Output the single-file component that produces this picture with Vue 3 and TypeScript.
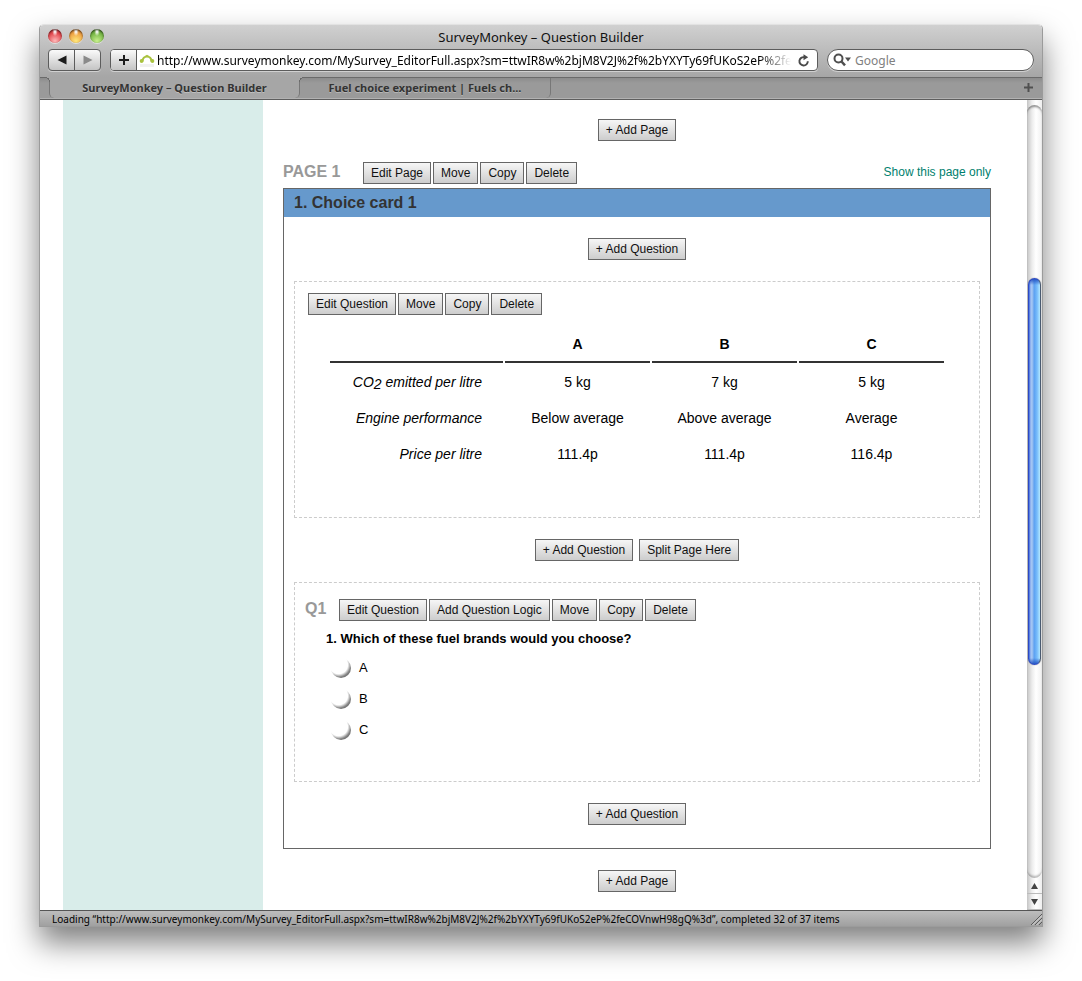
<script setup lang="ts">
import { ref } from 'vue'

interface Row {
  label: string
  values: string[]
}

const address = ref('http://www.surveymonkey.com/MySurvey_EditorFull.aspx?sm=ttwIR8w%2bjM8V2J%2f%2bYXYTy69fUKoS2eP%2feCOVnwH98gQ%3d')
const search = ref('')
const answer = ref('')
const options: string[] = ['A', 'B', 'C']
const rows: Row[] = [
  { label: 'Engine performance', values: ['Below average', 'Above average', 'Average'] },
  { label: 'Price per litre', values: ['111.4p', '111.4p', '116.4p'] },
]
</script>

<template>
  <div class="desktop">
    <div class="window">
      <header class="chrome">
        <div class="titlebar">
          <div class="lights">
            <button class="light red" aria-label="Close"></button>
            <button class="light amber" aria-label="Minimise"></button>
            <button class="light green" aria-label="Zoom"></button>
          </div>
          <div class="title">SurveyMonkey – Question Builder</div>
          <div></div>
        </div>
        <div class="toolbar">
          <div class="nav">
            <button aria-label="Back"><svg width="10" height="10" viewBox="0 0 10 10"><path d="M0.500 5L9.500 0.500V9.500Z" fill="#1c1c1c" /></svg></button>
            <button aria-label="Forward"><svg width="10" height="10" viewBox="0 0 10 10"><path d="M9.500 5L0.500 0.500V9.500Z" fill="#8a8a8a" /></svg></button>
          </div>
          <div class="address">
            <button class="plus" aria-label="Add bookmark"><svg width="12" height="12" viewBox="0 0 12 12"><path d="M6 1V11M1 6H11" stroke="#1c1c1c" stroke-width="2" /></svg></button>
            <svg class="favicon" width="16" height="16" viewBox="0 0 16 16">
              <rect x="1" y="12" width="14" height="3" fill="#f1f1f1" />
              <path d="M3.500 9.500C3.500 2.800 12.500 2.800 12.500 9.500" fill="none" stroke="#a9c23f" stroke-width="2.200" />
              <circle cx="2.600" cy="9" r="1.900" fill="#a9c23f" />
              <circle cx="13.400" cy="9" r="1.900" fill="#a9c23f" />
              <path d="M6 4L8 2.800L10 4Z" fill="#a9c23f" />
            </svg>
            <input v-model="address" class="url" type="text" aria-label="Address" />
            <button class="reload" aria-label="Reload">
              <svg width="12" height="13" viewBox="0 0 12 13"><path d="M9.800 7.200A4.200 4.200 0 1 1 6.500 3.200" fill="none" stroke="#4a4a4a" stroke-width="1.900" /><path d="M5.500 0.200L10.200 3.300L5.500 6.300Z" fill="#4a4a4a" /></svg>
            </button>
          </div>
          <label class="search">
            <svg width="18" height="14" viewBox="0 0 18 14"><circle cx="5.500" cy="5.500" r="4" fill="none" stroke="#4f4f4f" stroke-width="2" /><path d="M8.500 8.500L12 12.300" stroke="#4f4f4f" stroke-width="2.500" /><path d="M12 4.500H18L15 8.500Z" fill="#4f4f4f" /></svg>
            <input v-model="search" type="text" placeholder="Google" aria-label="Search Google" />
          </label>
        </div>
        <div class="tabs">
          <button class="tab active">SurveyMonkey – Question Builder</button>
          <button class="tab">Fuel choice experiment | Fuels ch...</button>
          <button class="newtab" aria-label="New tab"><svg width="9" height="9" viewBox="0 0 9 9"><path d="M4.500 0V9M0 4.500H9" stroke="#505050" stroke-width="2" /></svg></button>
        </div>
      </header>

      <div class="viewport">
        <aside class="side"></aside>
        <main class="main">
          <div class="center"><button class="btn">+ Add Page</button></div>
          <div class="pagebar">
            <h1>PAGE 1</h1>
            <div class="group">
              <button class="btn">Edit Page</button>
              <button class="btn">Move</button>
              <button class="btn">Copy</button>
              <button class="btn">Delete</button>
            </div>
            <a href="#">Show this page only</a>
          </div>
          <section class="panel">
            <h2>1. Choice card 1</h2>
            <div class="center"><button class="btn">+ Add Question</button></div>

            <article class="question card">
              <div class="group">
                <button class="btn">Edit Question</button>
                <button class="btn">Move</button>
                <button class="btn">Copy</button>
                <button class="btn">Delete</button>
              </div>
              <table>
                <thead>
                  <tr>
                    <th class="lead"></th>
                    <th v-for="o in options" :key="o" scope="col">{{ o }}</th>
                  </tr>
                </thead>
                <tbody>
                  <tr>
                    <th scope="row">CO<sub>2</sub> emitted per litre</th>
                    <td>5 kg</td>
                    <td>7 kg</td>
                    <td>5 kg</td>
                  </tr>
                  <tr v-for="r in rows" :key="r.label">
                    <th scope="row">{{ r.label }}</th>
                    <td v-for="(v, i) in r.values" :key="i">{{ v }}</td>
                  </tr>
                </tbody>
              </table>
            </article>

            <div class="center">
              <button class="btn">+ Add Question</button>
              <button class="btn">Split Page Here</button>
            </div>

            <article class="question choice">
              <div class="qbar">
                <h3>Q1</h3>
                <div class="group">
                  <button class="btn">Edit Question</button>
                  <button class="btn">Add Question Logic</button>
                  <button class="btn">Move</button>
                  <button class="btn">Copy</button>
                  <button class="btn">Delete</button>
                </div>
              </div>
              <fieldset>
                <legend>1. Which of these fuel brands would you choose?</legend>
                <label v-for="o in options" :key="o" class="option">
                  <input v-model="answer" type="radio" name="brand" :value="o" />
                  <span>{{ o }}</span>
                </label>
              </fieldset>
            </article>

            <div class="center"><button class="btn">+ Add Question</button></div>
          </section>
          <div class="center"><button class="btn">+ Add Page</button></div>
        </main>
        <div class="scroll">
          <div class="track">
            <div class="before"></div>
            <div class="thumb"></div>
            <div class="after"></div>
          </div>
          <button aria-label="Scroll up"><svg width="7" height="6" viewBox="0 0 7 6"><path d="M3.500 0L7 6H0Z" fill="#444" /></svg></button>
          <button aria-label="Scroll down"><svg width="7" height="6" viewBox="0 0 7 6"><path d="M3.500 6L7 0H0Z" fill="#444" /></svg></button>
        </div>
      </div>

      <footer class="status">
        <span>Loading “http://www.surveymonkey.com/MySurvey_EditorFull.aspx?sm=ttwIR8w%2bjM8V2J%2f%2bYXYTy69fUKoS2eP%2feCOVnwH98gQ%3d”, completed 32 of 37 items</span>
        <svg width="12" height="12" viewBox="0 0 12 12"><path d="M1 12L12 1M5 12L12 5M9 12L12 9" stroke="#5a5a5a" /><path d="M2.500 12L12 2.500M6.500 12L12 6.500" stroke="#d6d6d6" /></svg>
      </footer>
    </div>
  </div>
</template>

<style>
body {
  margin: 0;
  background: #fff;
}
</style>

<style scoped>
* {
  box-sizing: border-box;
}
button {
  font: inherit;
  margin: 0;
  padding: 0;
  border: 0;
  background: none;
}
.desktop {
  padding: 24px 39px 54px;
  overflow: hidden;
  font-family: "Liberation Sans", Arial, sans-serif;
}
.window {
  border: 1px solid #9b9b9b;
  border-top-color: #e2e2e2;
  border-radius: 5px 5px 0 0;
  background: #fff;
  box-shadow: 0 16px 30px rgba(0, 0, 0, 0.5);
}
.chrome {
  border-radius: 4px 4px 0 0;
  background: linear-gradient(#d0d0d0, #a6a6a6 52px);
  font-family: "Noto Sans", "Open Sans", sans-serif;
}
.titlebar {
  display: grid;
  grid-template-columns: 1fr auto 1fr;
  align-items: center;
  height: 23px;
}
.title {
  font-size: 13px;
  line-height: 22px;
  color: #111;
}
.lights {
  display: flex;
  gap: 7px;
  padding: 0 0 2px 8px;
}
.light {
  width: 14px;
  height: 14px;
  border-radius: 50%;
  box-shadow: inset 0 1px 2px rgba(0, 0, 0, 0.6), 0 1px 0 rgba(255, 255, 255, 0.5);
}
.red {
  background: radial-gradient(ellipse at 50% 18%, #fff 0 4%, transparent 28%), radial-gradient(circle at 50% 85%, #ffb9b9, #e2474d 60%, #8d1e22);
}
.amber {
  background: radial-gradient(ellipse at 50% 18%, #fff 0 4%, transparent 28%), radial-gradient(circle at 50% 85%, #ffe97c, #efa142 60%, #92521b);
}
.green {
  background: radial-gradient(ellipse at 50% 18%, #fff 0 4%, transparent 28%), radial-gradient(circle at 50% 85%, #c8f08e, #75b544 60%, #3c6b1e);
}
.toolbar {
  display: flex;
  align-items: center;
  gap: 9px;
  height: 29px;
  padding: 1px 8px 6px;
}
.nav,
.address,
.search {
  display: flex;
  align-items: center;
  height: 22px;
  border: 1px solid #5c5c5c;
  border-radius: 4px;
  box-shadow: 0 1px 0 rgba(255, 255, 255, 0.45);
}
.nav {
  width: 53px;
  background: linear-gradient(#fafafa, #c4c4c4);
}
.nav button {
  display: grid;
  place-items: center;
  flex: 1;
  height: 20px;
}
.nav button + button {
  border-left: 1px solid #5c5c5c;
}
.address {
  flex: 1;
  min-width: 0;
  overflow: hidden;
  background: #fff;
}
.plus {
  display: grid;
  place-items: center;
  width: 26px;
  height: 20px;
  border-right: 1px solid #5c5c5c;
  background: linear-gradient(#fafafa, #c4c4c4);
}
.favicon {
  margin: 0 2px;
}
.url {
  flex: 1;
  min-width: 0;
  height: 20px;
  padding: 0;
  border: 0;
  outline: 0;
  background: none;
  font: 12px "Noto Sans", "Open Sans", sans-serif;
  color: #000;
  -webkit-mask-image: linear-gradient(90deg, #000 calc(100% - 32px), transparent);
  mask-image: linear-gradient(90deg, #000 calc(100% - 32px), transparent);
}
.reload {
  display: grid;
  place-items: center;
  width: 26px;
  height: 20px;
}
.search {
  width: 207px;
  padding: 0 5px;
  gap: 4px;
  border-radius: 11px;
  background: #fff;
}
.search input {
  flex: 1;
  min-width: 0;
  height: 20px;
  padding: 0;
  border: 0;
  outline: 0;
  background: none;
  font: 12px "Noto Sans", "Open Sans", sans-serif;
}
.search input::placeholder {
  color: #808080;
  opacity: 1;
}
.tabs {
  display: flex;
  height: 23px;
  padding-left: 9px;
  border-top: 1px solid #6a6a6a;
  border-bottom: 1px solid #5e5e5e;
  background: linear-gradient(#8c8c8c, #9a9a9a 5px, #9a9a9a 20px, #b2b2b2 20px);
}
.tab {
  position: relative;
  width: 251px;
  height: 20px;
  border-right: 1px solid #777;
  border-radius: 0 0 5px 5px;
  font-size: 11px;
  font-weight: 700;
  line-height: 18px;
  color: #333;
  text-shadow: 0 1px 0 rgba(255, 255, 255, 0.3);
}
.tab.active {
  height: 21px;
  margin-top: -1px;
  border-left: 1px solid #777;
  background: #a6a6a6;
}
.tab.active::before,
.tab.active::after {
  content: "";
  position: absolute;
  top: 0;
  width: 5px;
  height: 5px;
}
.tab.active::before {
  left: -5px;
  background: radial-gradient(circle at 0 100%, transparent 4px, #6a6a6a 4px 5px, #a6a6a6 5px);
}
.tab.active::after {
  right: -5px;
  background: radial-gradient(circle at 100% 100%, transparent 4px, #6a6a6a 4px 5px, #a6a6a6 5px);
}
.newtab {
  margin: 0 9px 2px auto;
  line-height: 0;
}
.viewport {
  display: grid;
  grid-template-columns: 200px 1fr 15px;
  padding-left: 23px;
}
.side {
  background: #d9edea;
}
.main {
  display: flex;
  flex-direction: column;
  padding: 19px 36px 18px 20px;
}
.center {
  display: flex;
  justify-content: center;
  gap: 6px;
}
.btn {
  height: 22px;
  padding: 0 7px;
  border: 1px solid #666;
  background: linear-gradient(#f6f6f6, #cdcdcd);
  font-size: 12px;
  line-height: 20px;
  color: #111;
  white-space: nowrap;
}
.center .btn {
  padding: 0 7px;
}
.group {
  display: flex;
  gap: 2px;
}
.pagebar {
  display: flex;
  align-items: center;
  margin: 21px 0 4px;
}
h1,
h2,
h3 {
  margin: 0;
  font-size: 16px;
  font-weight: 700;
}
h1 {
  width: 80px;
  line-height: 18px;
  padding-bottom: 2px;
  color: #999;
}
.pagebar a {
  margin-left: auto;
  padding-bottom: 2px;
  font-size: 12px;
  color: #007f6e;
  text-decoration: none;
}
.panel {
  display: flex;
  flex-direction: column;
  gap: 21px;
  margin-bottom: 21px;
  padding-bottom: 23px;
  border: 1px solid #666;
}
h2 {
  padding: 0 10px;
  line-height: 28px;
  background: #6699cc;
  color: #333;
}
.question {
  margin: 0 10px;
  border: 1px dashed #ccc;
}
.card {
  padding: 11px 0 44px;
}
.card .group {
  margin-left: 13px;
}
table {
  table-layout: fixed;
  width: calc(100% - 66px);
  margin: 10px 33px 0;
  border-collapse: separate;
  border-spacing: 2px;
  font-size: 14px;
  line-height: 18px;
  color: #000;
}
th,
td {
  height: 34px;
  padding: 0;
  text-align: center;
}
thead th {
  height: 36px;
  border-bottom: 2px solid #333;
}
.lead {
  width: 173px;
}
tbody th {
  padding-right: 21px;
  font-weight: 400;
  font-style: italic;
  text-align: right;
}
sub {
  font-size: 14px;
  line-height: 0;
  vertical-align: -2px;
}
.choice {
  padding: 16px 0 36px 10px;
}
.qbar {
  display: flex;
  align-items: center;
}
h3 {
  width: 34px;
  line-height: 18px;
  padding-bottom: 2px;
  color: #999;
}
fieldset {
  margin: 0;
  padding: 0 0 0 21px;
  border: 0;
}
legend {
  margin-bottom: 4px;
  padding: 9px 0 0;
  font-size: 13px;
  font-weight: 700;
  line-height: 18px;
}
.option {
  display: flex;
  align-items: center;
  gap: 8px;
  width: 60px;
  height: 31px;
  margin-left: 5px;
  font-size: 13px;
}
.option input {
  appearance: none;
  width: 20px;
  height: 20px;
  margin: 0;
  border-radius: 50%;
  background: radial-gradient(circle at 38% 34%, #fff 0 9px, #ddd 10px, #8c8c8c 12px, #777 13px);
}
.option input:checked {
  background: radial-gradient(circle at 50% 50%, #333 0 4px, #fff 5px 7px, #999 10px);
}
.scroll {
  display: flex;
  flex-direction: column;
  background: linear-gradient(90deg, #c4c4c4, #eee 5px, #fff 9px, #eee);
}
.track {
  display: flex;
  flex-direction: column;
  flex: 1;
  margin-top: 5px;
  border-radius: 8px;
  background: linear-gradient(90deg, #c4c4c4, #ececec 5px, #fff 9px, #f0f0f0);
  box-shadow: inset 0 3px 2px -1px rgba(0, 0, 0, 0.4), inset 0 -3px 2px -1px rgba(0, 0, 0, 0.25);
}
.before {
  flex: 173;
}
.thumb {
  flex: 386;
  margin: 0 1px;
  border: 1px solid #2d49c4;
  border-right-color: #4a5a70;
  border-radius: 7px;
  background:
    linear-gradient(#2757c4, transparent 6px calc(100% - 6px), #2757c4),
    linear-gradient(90deg, #3c68dc, #a9c8f4 2px, #8fb9f0 4px, #5a9ff0 5px, #77bcfb 8px, #b4e8ff);
  box-shadow: 0 0 1px #555;
}
.after {
  flex: 213;
}
.scroll button {
  display: grid;
  place-items: center;
  height: 16px;
  border-bottom: 1px solid #bbb;
}
.status {
  display: flex;
  justify-content: space-between;
  align-items: center;
  height: 16px;
  padding-left: 12px;
  border-top: 1px solid #555;
  background: linear-gradient(#bdbdbd, #a0a0a0);
  font: 10px/14px "Noto Sans", "Open Sans", sans-serif;
  color: #000;
  white-space: nowrap;
}
</style>
